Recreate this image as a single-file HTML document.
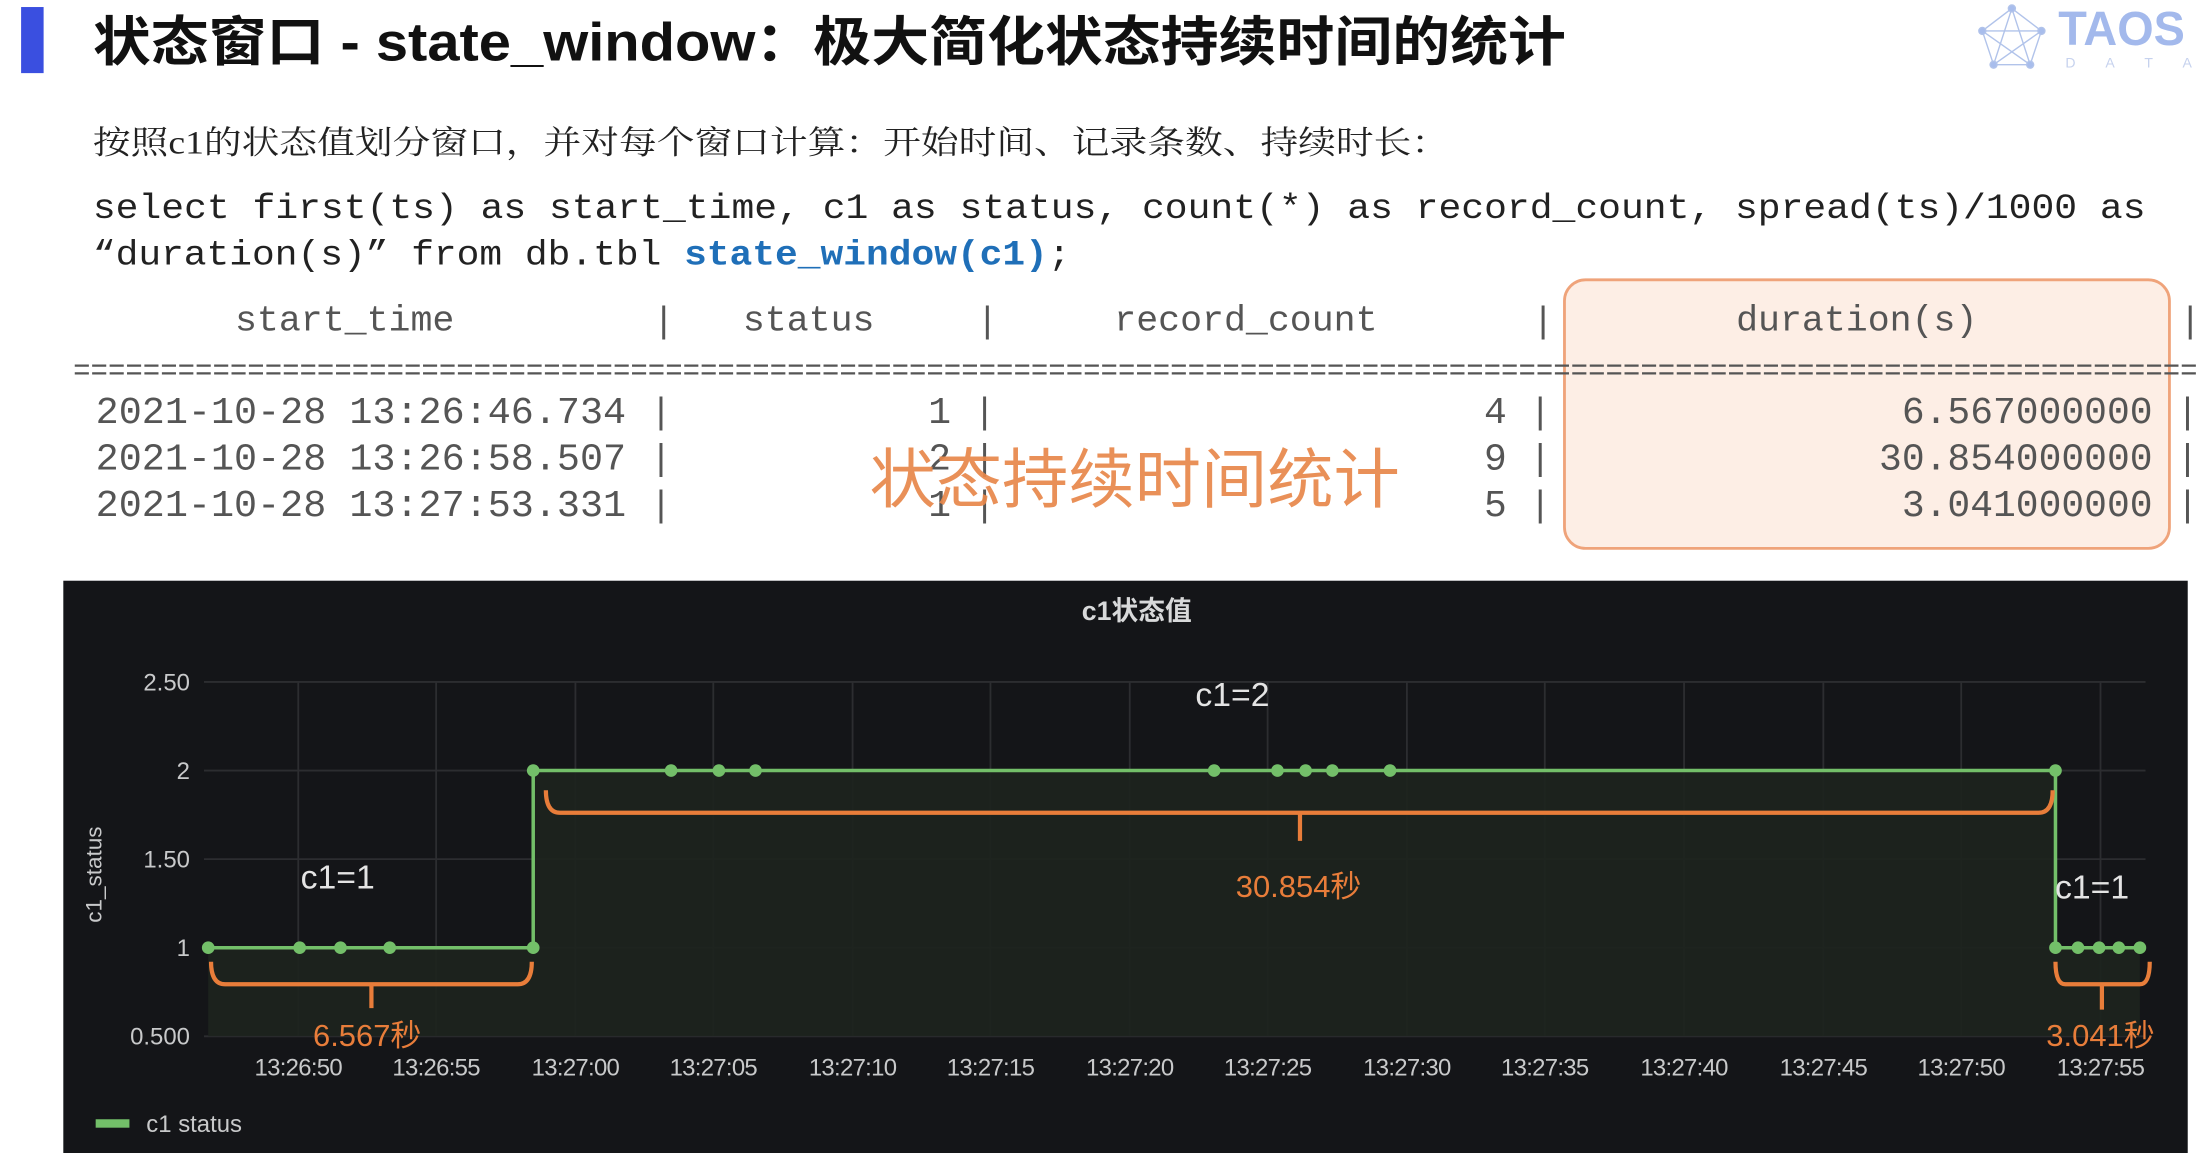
<!DOCTYPE html>
<html><head><meta charset="utf-8"><style>
html,body{margin:0;padding:0;background:#fff;width:2206px;height:1160px;overflow:hidden}
#w{position:absolute;left:0;top:0;width:1568px;height:825px;transform:scale(1.4069,1.4061);transform-origin:0 0}
</style></head><body><div id="w">
<svg width="1568" height="825" viewBox="0 0 1568 825" xmlns="http://www.w3.org/2000/svg">
<rect x="15" y="5" width="16" height="47" fill="#3a4fe0"/>
<text x="66" y="43" font-family="Liberation Sans,Noto Sans CJK SC,sans-serif" font-size="38" font-weight="bold" fill="#111" textLength="1047" lengthAdjust="spacingAndGlyphs">状态窗口 - state_window：极大简化状态持续时间的统计</text>
<!-- logo -->
<g stroke="#a9bde8" stroke-width="1" fill="#9fb6ea" opacity="0.9">
<polygon points="1430,6 1451,22 1443,46 1417,46 1409,22" fill="none"/>
<polyline points="1430,6 1443,46 1409,22 1451,22 1417,46 1430,6" fill="none"/>
<circle cx="1430" cy="6" r="2.5"/><circle cx="1451" cy="22" r="2.5"/><circle cx="1443" cy="46" r="2.5"/><circle cx="1417" cy="46" r="2.5"/><circle cx="1409" cy="22" r="2.5"/>
</g>
<text x="1463" y="32" font-family="Liberation Sans,sans-serif" font-size="34" font-weight="bold" fill="#a3b9ec" textLength="90" lengthAdjust="spacingAndGlyphs">TAOS</text>
<text x="1468" y="48" font-family="Liberation Sans,sans-serif" font-size="10" fill="#c6d2ee" textLength="90" lengthAdjust="spacing">D A T A</text>

<text x="66" y="109" font-family="Liberation Serif,Noto Serif CJK SC,serif" font-size="23" fill="#222" textLength="964" lengthAdjust="spacingAndGlyphs">按照c1的状态值划分窗口，并对每个窗口计算：开始时间、记录条数、持续时长：</text>
<g font-family="Liberation Mono,monospace" font-size="25" fill="#222">
<text x="66" y="155" textLength="1459" lengthAdjust="spacingAndGlyphs">select first(ts) as start_time, c1 as status, count(*) as record_count, spread(ts)/1000 as</text>
<text x="66" y="188" textLength="695" lengthAdjust="spacingAndGlyphs">“duration(s)” from db.tbl <tspan fill="#1f6fb8" font-weight="bold">state_window(c1)</tspan>;</text>
</g>
<rect x="1112" y="199" width="430" height="191" rx="15" fill="#fdeee5" stroke="#efa37a" stroke-width="2"/>
<g font-family="Liberation Mono,monospace" font-size="26" fill="#555">
<text x="167" y="235">start_time</text>
<text x="528" y="235">status</text>
<text x="792" y="235">record_count</text>
<text x="1234" y="235">duration(s)</text>
<text x="464" y="236">|</text><text x="694" y="236">|</text><text x="1089" y="236">|</text><text x="1549" y="236">|</text>
<text x="52" y="270" font-size="22" textLength="1510" lengthAdjust="spacingAndGlyphs">==========================================================================================================================</text>
<g font-size="27">
<text x="68" y="301" textLength="377" lengthAdjust="spacingAndGlyphs">2021-10-28 13:26:46.734</text>
<text x="68" y="334" textLength="377" lengthAdjust="spacingAndGlyphs">2021-10-28 13:26:58.507</text>
<text x="68" y="367" textLength="377" lengthAdjust="spacingAndGlyphs">2021-10-28 13:27:53.331</text>
<text x="676" y="301" text-anchor="end">1</text><text x="676" y="334" text-anchor="end">2</text><text x="676" y="367" text-anchor="end">1</text>
<text x="1071" y="301" text-anchor="end">4</text><text x="1071" y="334" text-anchor="end">9</text><text x="1071" y="367" text-anchor="end">5</text>
<text x="1530" y="301" text-anchor="end">6.567000000</text><text x="1530" y="334" text-anchor="end">30.854000000</text><text x="1530" y="367" text-anchor="end">3.041000000</text>
<g font-size="26"><text x="462" y="301">|</text><text x="462" y="334">|</text><text x="462" y="367">|</text>
<text x="692" y="301">|</text><text x="692" y="334">|</text><text x="692" y="367">|</text>
<text x="1087" y="301">|</text><text x="1087" y="334">|</text><text x="1087" y="367">|</text>
<text x="1547" y="301">|</text><text x="1547" y="334">|</text><text x="1547" y="367">|</text></g>
</g></g>
<text x="618" y="357" font-family="Noto Sans CJK SC,sans-serif" font-size="46" fill="#e8874a" opacity="0.92" textLength="377" lengthAdjust="spacingAndGlyphs">状态持续时间统计</text>

<!-- chart -->
<rect x="45" y="413" width="1510" height="407" fill="#141518"/>
<text x="808" y="441" text-anchor="middle" font-family="Liberation Sans,Noto Sans CJK SC,sans-serif" font-size="19" font-weight="bold" fill="#d8d9da">c1状态值</text>
<g stroke="#2c2d30" stroke-width="1.3">
<line x1="145" y1="485" x2="1525" y2="485"/><line x1="145" y1="548" x2="1525" y2="548"/><line x1="145" y1="611" x2="1525" y2="611"/><line x1="145" y1="674" x2="1525" y2="674"/><line x1="145" y1="737" x2="1525" y2="737"/>
<line x1="212" y1="485" x2="212" y2="737"/><line x1="310" y1="485" x2="310" y2="737"/><line x1="409" y1="485" x2="409" y2="737"/><line x1="507" y1="485" x2="507" y2="737"/><line x1="606" y1="485" x2="606" y2="737"/><line x1="704" y1="485" x2="704" y2="737"/><line x1="803" y1="485" x2="803" y2="737"/><line x1="901" y1="485" x2="901" y2="737"/><line x1="1000" y1="485" x2="1000" y2="737"/><line x1="1098" y1="485" x2="1098" y2="737"/><line x1="1197" y1="485" x2="1197" y2="737"/><line x1="1296" y1="485" x2="1296" y2="737"/><line x1="1394" y1="485" x2="1394" y2="737"/><line x1="1493" y1="485" x2="1493" y2="737"/>
</g>
<g font-family="Liberation Sans,sans-serif" font-size="17" fill="#c8c9ca" text-anchor="end">
<text x="135" y="491">2.50</text><text x="135" y="554">2</text><text x="135" y="617">1.50</text><text x="135" y="680">1</text><text x="135" y="743">0.500</text>
</g>
<g font-family="Liberation Sans,sans-serif" font-size="17" fill="#c8c9ca" text-anchor="middle" letter-spacing="-0.5">
<text x="212" y="765">13:26:50</text><text x="310" y="765">13:26:55</text><text x="409" y="765">13:27:00</text><text x="507" y="765">13:27:05</text><text x="606" y="765">13:27:10</text><text x="704" y="765">13:27:15</text><text x="803" y="765">13:27:20</text><text x="901" y="765">13:27:25</text><text x="1000" y="765">13:27:30</text><text x="1098" y="765">13:27:35</text><text x="1197" y="765">13:27:40</text><text x="1296" y="765">13:27:45</text><text x="1394" y="765">13:27:50</text><text x="1493" y="765">13:27:55</text>
</g>
<text transform="translate(72,622) rotate(-90)" text-anchor="middle" font-family="Liberation Sans,sans-serif" font-size="16" fill="#c8c9ca">c1_status</text>
<polygon points="148,674 379,674 379,548 1461,548 1461,674 1521,674 1521,737 148,737" fill="#1d231e" opacity="0.9"/>
<polyline points="148,674 379,674 379,548 1461,548 1461,674 1521,674" fill="none" stroke="#73bf69" stroke-width="2.5"/>
<g fill="#73bf69">
<circle cx="148" cy="674" r="4.5"/><circle cx="213" cy="674" r="4.5"/><circle cx="242" cy="674" r="4.5"/><circle cx="277" cy="674" r="4.5"/><circle cx="379" cy="674" r="4.5"/>
<circle cx="379" cy="548" r="4.5"/><circle cx="477" cy="548" r="4.5"/><circle cx="511" cy="548" r="4.5"/><circle cx="537" cy="548" r="4.5"/><circle cx="863" cy="548" r="4.5"/><circle cx="908" cy="548" r="4.5"/><circle cx="928" cy="548" r="4.5"/><circle cx="947" cy="548" r="4.5"/><circle cx="988" cy="548" r="4.5"/><circle cx="1461" cy="548" r="4.5"/>
<circle cx="1461" cy="674" r="4.5"/><circle cx="1477" cy="674" r="4.5"/><circle cx="1492" cy="674" r="4.5"/><circle cx="1506" cy="674" r="4.5"/><circle cx="1521" cy="674" r="4.5"/>
</g>
<g fill="none" stroke="#e87d3a" stroke-width="3">
<path d="M150,684 Q150,700 160,700 L368,700 Q378,700 378,684 M264,700 L264,717"/>
<path d="M388,562 Q388,578 398,578 L1449,578 Q1459,578 1459,562 M924,578 L924,598"/>
<path d="M1461,684 Q1461,700 1468,700 L1521,700 Q1528,700 1528,684 M1494,700 L1494,718"/>
</g>
<g font-family="Liberation Sans,Noto Sans CJK SC,sans-serif" font-size="22" fill="#e87d3a" text-anchor="middle">
<text x="261" y="744">6.567秒</text><text x="923" y="638">30.854秒</text><text x="1493" y="744">3.041秒</text>
</g>
<g font-family="Liberation Sans,sans-serif" font-size="24" fill="#e4e4e4" text-anchor="middle">
<text x="240" y="632">c1=1</text><text x="876" y="502">c1=2</text><text x="1487" y="639">c1=1</text>
</g>
<rect x="68" y="796" width="24" height="6" fill="#73bf69"/>
<text x="104" y="805" font-family="Liberation Sans,sans-serif" font-size="17" fill="#c8c9ca">c1 status</text>
</svg>
</div></body></html>
